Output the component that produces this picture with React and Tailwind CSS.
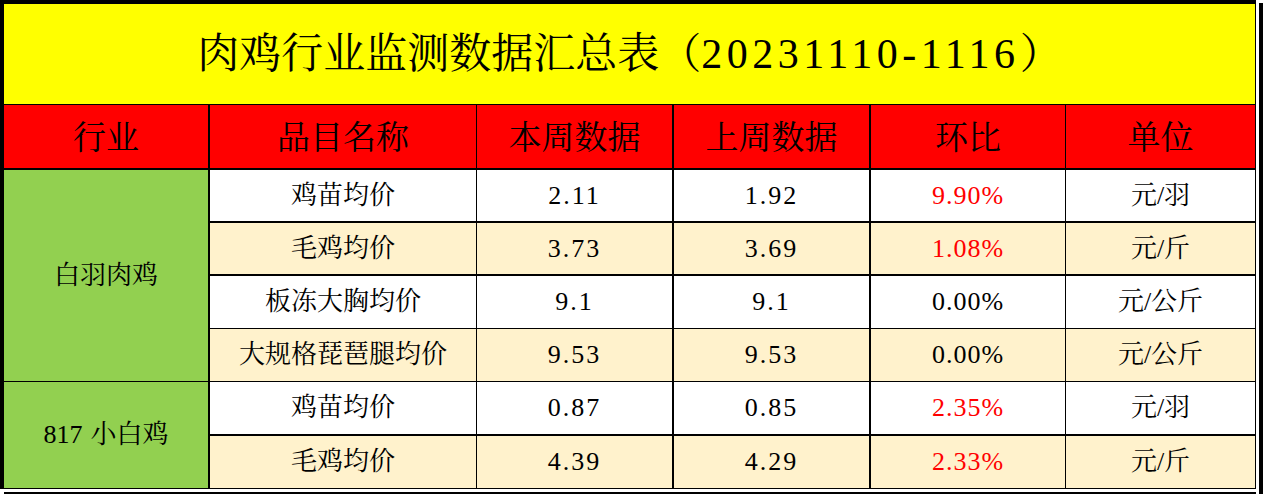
import React from "react";

const rows = [
  { name: "鸡苗均价", cur: "2.11", prev: "1.92", ratio: "9.90%", red: true, unit: "元/羽", h: "h-[53px] border-b-2", bg: "bg-white" },
  { name: "毛鸡均价", cur: "3.73", prev: "3.69", ratio: "1.08%", red: true, unit: "元/斤", h: "h-[53px] border-b-2", bg: "bg-[#FFF2CC]" },
  { name: "板冻大胸均价", cur: "9.1", prev: "9.1", ratio: "0.00%", red: false, unit: "元/公斤", h: "h-[53px] border-b", bg: "bg-white" },
  { name: "大规格琵琶腿均价", cur: "9.53", prev: "9.53", ratio: "0.00%", red: false, unit: "元/公斤", h: "h-[53px] border-b", bg: "bg-[#FFF2CC]" },
  { name: "鸡苗均价", cur: "0.87", prev: "0.85", ratio: "2.35%", red: true, unit: "元/羽", h: "h-[54px] border-b-2", bg: "bg-white" },
  { name: "毛鸡均价", cur: "4.39", prev: "4.29", ratio: "2.33%", red: true, unit: "元/斤", h: "h-[53px] border-b", bg: "bg-[#FFF2CC]" },
];

function Row({ r }) {
  return (
    <div className={`flex border-black ${r.h} ${r.bg} text-[26px] leading-none text-black`}>
      <div className="w-[267px] border-r border-black flex items-center justify-center">{r.name}</div>
      <div className="w-[197px] border-r-2 border-black flex items-center justify-center tracking-[2px]">{r.cur}</div>
      <div className="w-[197px] border-r-2 border-black flex items-center justify-center tracking-[2px]">{r.prev}</div>
      <div className={`w-[195px] border-r border-black flex items-center justify-center tracking-[1px] ${r.red ? "text-[#FF0000]" : "text-black"}`}>{r.ratio}</div>
      <div className="w-[190px] border-r border-black flex items-center justify-center">{r.unit}</div>
    </div>
  );
}

export default function App() {
  return (
    <div className="w-[1263px] h-[494px] bg-white flex font-['Liberation_Serif','Noto_Serif_CJK_SC','Noto_Sans_CJK_SC',serif] text-black overflow-hidden">
      <div className="w-[1256px] flex flex-col">
        <div className="w-[1256px] border-l-4 border-t-4 border-black flex flex-col">
          {/* Title */}
          <div className="h-[101px] bg-[#FFFF00] border-b border-r border-black flex items-center justify-center text-[42px] leading-none">
            <span>肉鸡行业监测数据汇总表（<span className="tracking-[4.5px]">20231110-1116</span>）</span>
          </div>
          {/* Header */}
          <div className="h-[65px] bg-[#FF0000] border-b-2 border-black flex text-[33px] leading-none">
            <div className="w-[206px] border-r-2 border-black flex items-center justify-center pt-[3px]">行业</div>
            <div className="w-[267px] border-r border-black flex items-center justify-center pt-[3px]">品目名称</div>
            <div className="w-[197px] border-r-2 border-black flex items-center justify-center pt-[3px]">本周数据</div>
            <div className="w-[197px] border-r-2 border-black flex items-center justify-center pt-[3px]">上周数据</div>
            <div className="w-[195px] border-r border-black flex items-center justify-center pt-[3px]">环比</div>
            <div className="w-[190px] border-r border-black flex items-center justify-center pt-[3px]">单位</div>
          </div>
          {/* Body */}
          <div className="flex">
            <div className="w-[206px] border-r-2 border-black flex flex-col bg-[#92D050] text-[26px] leading-none">
              <div className="h-[212px] border-b border-black flex items-center justify-center">白羽肉鸡</div>
              <div className="h-[107px] border-b border-black flex items-center justify-center">
                <span><span className="mr-[8px]">817</span>小白鸡</span>
              </div>
            </div>
            <div className="w-[1046px] flex flex-col">
              {rows.map((r, i) => (
                <Row key={i} r={r} />
              ))}
            </div>
          </div>
        </div>
        <div className="h-[3px] bg-white" />
        <div className="h-[2px] bg-black ml-[4px]" />
      </div>
      <div className="w-[3px] bg-white" />
      <div className="w-[4px] bg-black mt-[3px]" />
    </div>
  );
}
